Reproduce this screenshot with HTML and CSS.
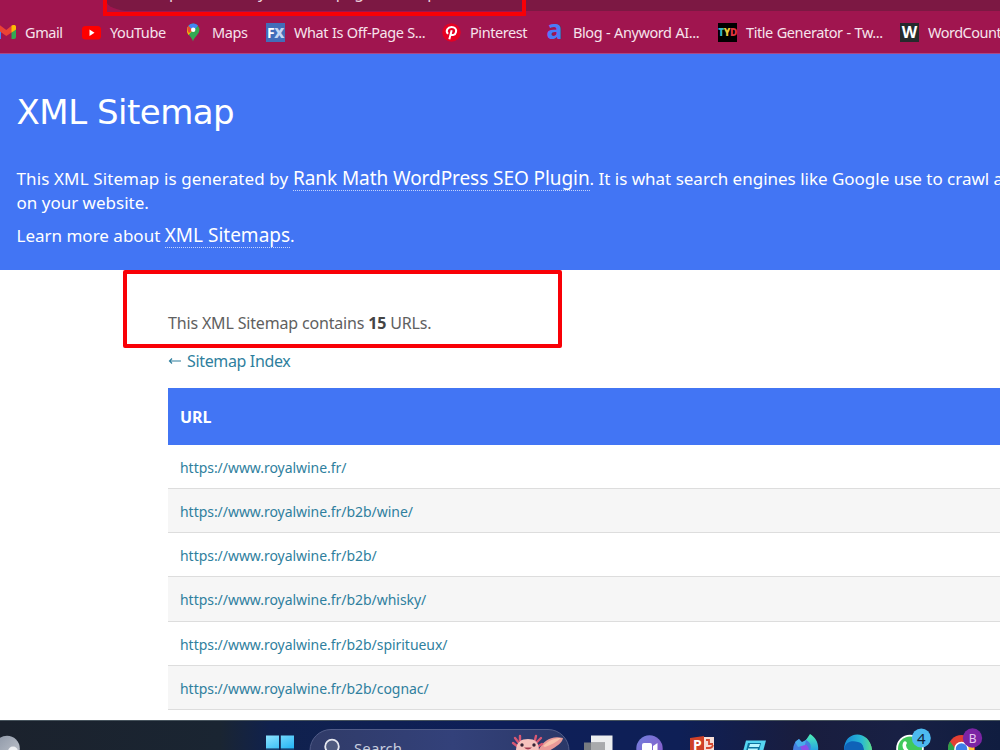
FILE: index.html
```html
<!DOCTYPE html>
<html lang="en">
<head>
<meta charset="utf-8">
<title>XML Sitemap</title>
<link rel="stylesheet" href="styles.css">
</head>
<body>
<div class="screen">
  <header class="browser">
    <div class="toolbar"><div class="omnibox"><span>https://www.royalwine.fr/page-sitemap.xml</span></div></div>
    <nav class="bookmarks">
      <a class="bm w-gmail"><svg viewBox="0 0 19 19"><path d="M0 3h4v13H2a2 2 0 0 1-2-2z" fill="#4285f4"/><path d="M14.500 6 19 3v11a2 2 0 0 1-2 2h-2.500z" fill="#34a853"/><path d="M0 6.500V4c0-2 2-2.500 3.300-1.500L9.300 7l5.500-4.500C16.200 1.500 19 2 19 4v2.500L9.300 13z" fill="#ea4335"/><path d="M14.500 2.800C16.200 1.500 19 2 19 4v2.500l-4.500 3z" fill="#fbbc04"/></svg><span>Gmail</span></a>
      <a class="bm w-youtube"><svg viewBox="0 0 19 19"><rect y="3" width="19" height="13.500" rx="3.500" fill="#f00"/><path d="M7.500 6.500v6.500l5-3.250z" fill="#fff"/></svg><span>YouTube</span></a>
      <a class="bm w-maps"><svg viewBox="0 0 19 19"><path d="M9 18.500C8 14 3 11.500 3 6.800A6.200 6.200 0 0 1 15.400 6.800C15.400 11.500 10 14 9 18.500z" fill="#34a853"/><path d="M3 7a6.200 6.200 0 0 1 1.500-4.300L9 7l-4.600 5C3.500 10.500 3 9 3 7z" fill="#fbbc04"/><path d="M4.500 2.700 9 7l-4 3C3.500 8 2.500 5 4.500 2.700z" fill="#ea4335"/><path d="M4.500 2.700C7 0 11.500-.2 14 2.800L9.200 8z" fill="#4285f4"/><circle cx="9.200" cy="6.700" r="2.200" fill="#fff"/></svg><span>Maps</span></a>
      <a class="bm w-fx"><i class="tile fx">F<b>X</b></i><span>What Is Off-Page S...</span></a>
      <a class="bm w-pin"><svg viewBox="0 0 19 19"><circle cx="9.500" cy="9.500" r="9.200" fill="#e60023"/><path d="M6 10.800C3 7.500 6 4 9.500 4c3.300 0 5.200 2.200 4.500 5-.7 3-4 4-5.200 2M9.700 7.200 7.300 16.300" fill="none" stroke="#fff" stroke-width="2"/></svg><span>Pinterest</span></a>
      <a class="bm w-blog"><i class="tile any">a</i><span>Blog - Anyword AI...</span></a>
      <a class="bm w-title"><i class="tile tyd"><b class="t">T</b><b class="y">Y</b><b class="d">D</b></i><span>Title Generator - Tw...</span></a>
      <a class="bm w-word"><i class="tile word">W</i><span>WordCount</span></a>
    </nav>
    <div class="mark mark-url"></div>
  </header>

  <section class="hero">
    <h1>XML Sitemap</h1>
    <p class="line one"><span class="s1">This XML Sitemap is generated by </span><a class="s2">Rank Math WordPress SEO Plugin</a><span class="s3">. It is what search engines like Google use to crawl and</span></p>
    <p class="line two">on your website.</p>
    <p class="line three"><span class="s4">Learn more about </span><a class="s5">XML Sitemaps</a>.</p>
  </section>

  <main class="content">
    <p class="count">This XML Sitemap contains <strong>15</strong> URLs.</p>
    <p class="back"><svg viewBox="0 0 14 10"><path d="M13 5H1.500M4 2.500 1.500 5 4 7.500" fill="none" stroke="currentColor" stroke-width="1.200"/></svg><a>Sitemap Index</a></p>
    <div class="table">
      <div class="th">URL</div>
      <div class="td">https://www.royalwine.fr/</div>
      <div class="td alt">https://www.royalwine.fr/b2b/wine/</div>
      <div class="td">https://www.royalwine.fr/b2b/</div>
      <div class="td alt">https://www.royalwine.fr/b2b/whisky/</div>
      <div class="td">https://www.royalwine.fr/b2b/spiritueux/</div>
      <div class="td alt">https://www.royalwine.fr/b2b/cognac/</div>
    </div>
    <div class="mark mark-count"></div>
  </main>

  <footer class="taskbar">
    <svg class="icons" viewBox="0 0 1000 30">
      <defs>
        <linearGradient id="win" x2="1" y2="1"><stop stop-color="#8de3ff"/><stop offset="1" stop-color="#22b4f5"/></linearGradient>
        <linearGradient id="moon" x2="1" y2="1"><stop stop-color="#8b95a5"/><stop offset="1" stop-color="#c3c7cf"/></linearGradient>
        <linearGradient id="search"><stop stop-color="#303b68"/><stop offset=".55" stop-color="#33417a"/><stop offset="1" stop-color="#2b3868"/></linearGradient>
        <linearGradient id="meet" x2="1" y2="1"><stop stop-color="#7180dc"/><stop offset="1" stop-color="#8a55c8"/></linearGradient>
        <linearGradient id="edge"><stop stop-color="#1689d8"/><stop offset=".6" stop-color="#28b9d5"/><stop offset="1" stop-color="#5ddc8c"/></linearGradient>
        <linearGradient id="teal" x2="0" y2="1"><stop stop-color="#4df0b5"/><stop offset="1" stop-color="#26a0e5"/></linearGradient>
      </defs>
      <circle cx="7" cy="28.500" r="12.800" fill="url(#moon)"/><circle cx="13" cy="31.500" r="5" fill="#eef0f3"/>
      <path d="M266 15.500h13v13h-13zM280.800 15.500h13.200v13h-13.200z" fill="url(#win)"/><path d="M266 29.700h13v1h-13zM280.800 29.700h13.200v1h-13.200z" fill="#28a8e8"/>
      <rect x="310" y="9.500" width="259" height="50" rx="21" fill="url(#search)" stroke="#515c88"/>
      <circle cx="332" cy="26.500" r="6.800" fill="#505b80" stroke="#e6e8f0" stroke-width="1.800"/>
      <g>
        <path d="M538 31c5-10 13-16 25-13-1 6-8 9-14 13z" fill="#e99a98"/><path d="M543 26c6-6 12-8 18-8-4 4-10 7-16 9z" fill="#f8c3ad"/>
        <path d="M519 23l-4-5M517 26l-4-3M520 20v-4M535 20l1-4M536 23l5-5M537 27l5-3" stroke="#d95873" stroke-width="2.400" stroke-linecap="round"/>
        <path d="M516 31c0-9 5-12 12-12s11 3 11 12z" fill="#f6c2bd"/><circle cx="522" cy="25" r="1.700" fill="#372535"/><circle cx="534" cy="25" r="1.700" fill="#372535"/><path d="M524 27.500q4 4 8 0" fill="#a33b50"/>
      </g>
      <path d="M591 15.500h21.500V31H591z" fill="#eceeef"/><path d="M584 22.500h21V31h-21z" fill="#777b80"/><path d="M591 22.500h14V31h-14z" fill="#a8aaac"/>
      <circle cx="649.500" cy="28.500" r="13.200" fill="url(#meet)"/><rect x="642" y="23" width="10" height="10" rx="2" fill="#fff"/><path d="m653 26 4.500-3v8H653z" fill="#fff"/>
      <path d="M703 17h11v14h-11z" fill="#f7ded7"/><path d="M690 18l14-2v15h-14z" fill="#cf4128"/><path d="M706 20h3v4h4M706 28h3a4 4 0 0 0 4-3" stroke="#d64b31" stroke-width="1.800" fill="none"/>
      <path d="M746 20.500h20l-3 11h-20z" fill="#55d5f1"/><path d="M748 23h13l-2 8h-13z" fill="#0d739e"/><path d="M750 24h10l-1 3h-10zM748 28.500h10l-.6 2H748z" fill="#b8f5ff"/>
      <path d="M793 31c0-6 2-10 6-12l3 5c2-3 4-4 6-6 5 3 10 8 10 13z" fill="#447edf"/><path d="M806 20l4-6c6 4 9 9 8 17h-8c2-6 0-9-4-11z" fill="url(#teal)"/><path d="M800 26c4-4 9-1 9 5h-7z" fill="#8d4ee8"/><path d="m795 22 4-3 3 3 4-2-1 5-7 2z" fill="#48aceb"/>
      <path d="M844 31c-1-22 27-22 28 0h-8c0-8-10-9-13 0z" fill="url(#edge)"/><path d="M844 30c1-8 7-10 14-8 5 1 6 4 6 9h-19z" fill="#0f62b8"/><path d="M846 22c8-5 18-1 18 9h8c0-15-19-22-26-9z" fill="url(#edge)"/>
      <circle cx="910" cy="28.500" r="13.800" fill="#fff"/><circle cx="910" cy="28.500" r="12" fill="#40c95b"/><path d="M905 23c-2 3 0 6 3 9" stroke="#fff" stroke-width="3.500" stroke-linecap="round" fill="none"/>
      <circle cx="961.500" cy="28.500" r="13.500" fill="#e33f33"/><path d="M950 21.500 957 31h-9c0-4 0-7 2-9.500z" fill="#2ba24c"/><path d="M961 22h13v9h-13z" fill="#fbc52d"/><circle cx="961.500" cy="29" r="6.500" fill="#3d7ee8" stroke="#fff" stroke-width="1.500"/>
      <circle cx="921.300" cy="18" r="9.500" fill="#4dbaf0"/><circle cx="972.500" cy="18" r="9.700" fill="#7b24a4"/>
      <text class="tb-search" x="354" y="33.500" textLength="48">Search</text>
      <text class="tb-p" x="693" y="30">P</text>
      <text class="tb-badge" x="917" y="23.500">4</text>
      <text class="tb-b" x="968.700" y="22.500">B</text>
    </svg>
  </footer>
</div>
</body>
</html>
```
FILE: styles.css
```css
* { box-sizing: border-box; }
body { margin: 0; font-family: "Noto Sans", "Open Sans", sans-serif; }
p, h1 { margin: 0; }
.screen { width: 1000px; height: 750px; overflow: hidden; display: flex; flex-direction: column; background: #fff; }
.browser { position: relative; height: 54px; flex: none; background: #a0154f; border-bottom: 1px solid #a94a86; overflow: hidden; }
.toolbar { height: 11px; padding-left: 106px; }
.omnibox { height: 11px; background: #7c1843; border-bottom-left-radius: 24px 11px; overflow: hidden; color: #ead3dd; font-size: 16px; line-height: 20px; padding-left: 42px; }
.omnibox span { display: block; margin-top: -18px; white-space: nowrap; letter-spacing: -.15px; }
.bookmarks { display: flex; height: 42px; align-items: center; margin-left: -3px; }
.bm { display: flex; flex: none; align-items: center; gap: 9px; color: #f6e3ec; font-size: 14.500px; white-space: nowrap; letter-spacing: -.42px; word-spacing: .5px; }
.bm svg, .tile { width: 19px; height: 19px; flex: none; }
.w-gmail { width: 85px; } .w-youtube { width: 102px; } .w-maps { width: 82px; } .w-fx { width: 176px; }
.w-pin { width: 103px; } .w-blog { width: 173px; } .w-title { width: 182px; } .w-word { width: 120px; letter-spacing: -.5px; }
.tile { font-style: normal; font-weight: 700; line-height: 19px; text-align: center; color: #fff; letter-spacing: 0; }
.fx { background: #426db9; font-size: 14px; letter-spacing: -.5px; }
.fx b { color: #c4d6f3; }
.any { color: #4a7cf8; font-size: 27px; line-height: 12px; }
.tyd { background: #000; font-size: 10px; letter-spacing: -.4px; }
.tyd .t { color: #38b8c6; } .tyd .y { color: #eac83b; } .tyd .d { color: #df3340; }
.word { background: #252a2c; font-size: 16px; }
.mark { position: absolute; border: 4px solid #f90006; }
.mark-url { left: 103px; top: -20px; width: 423px; height: 36px; }
.hero { height: 216px; flex: none; background: #4275f4; color: #fff; padding: 34px 0 0 16.500px; }
h1 { font: 400 34px/48px "DejaVu Sans", Verdana, sans-serif; letter-spacing: -.5px; margin-bottom: 31px; }
.line { font-size: 17px; line-height: 24px; white-space: nowrap; height: 24px; }
.line a { font-size: 19px; line-height: 20px; border-bottom: 1px dotted #c5d4fc; display: inline-block; height: 22.500px; }
.s1 { letter-spacing: .12px; }
.s2 { letter-spacing: -.07px; }
.s3 { letter-spacing: -.01px; }
.three { margin-top: 9px; }
.content { position: relative; flex: 1; padding: 41px 0 0 168px; min-height: 0; overflow: hidden; color: #606060; }
.count { font-size: 16px; line-height: 24px; height: 24px; letter-spacing: -.17px; }
.count strong { color: #444; }
.back { display: flex; align-items: center; gap: 5px; font-size: 16px; line-height: 24px; margin-top: 14px; color: #2f7f9e; letter-spacing: -.35px; }
.back svg { width: 14px; height: 10px; }
.table { margin-top: 14.500px; }
.th { height: 57.500px; background: #4275f4; color: #fff; font-weight: 700; font-size: 16px; line-height: 58px; padding-left: 12px; }
.td { height: 44.150px; border-bottom: 1px solid #ddd; font-size: 14px; line-height: 45px; padding-left: 12px; color: #2f7f9e; letter-spacing: -.04px; }
.alt { background: #f6f6f6; }
.mark-count { left: 123px; top: 0; width: 439px; height: 78px; border-radius: 2px; }
.taskbar { height: 30px; flex: none; border-top: 1px solid #46535c; background: linear-gradient(90deg, #1b222d 0, #1a2532 22%, #10214d 27%, #0e1f59 50%, #0e1f56 68%, #191d3e 80%, #182044 90%, #101d40 100%); }
.icons { display: block; width: 1000px; height: 30px; margin-top: -1px; }
.tb-search { font-size: 15px; fill: #c8cede; }
.tb-p { font-size: 14px; font-weight: 700; fill: #fff; }
.tb-badge { font-size: 15px; fill: #10243a; }
.tb-b { font-size: 12px; fill: #e9c8f2; }
```
